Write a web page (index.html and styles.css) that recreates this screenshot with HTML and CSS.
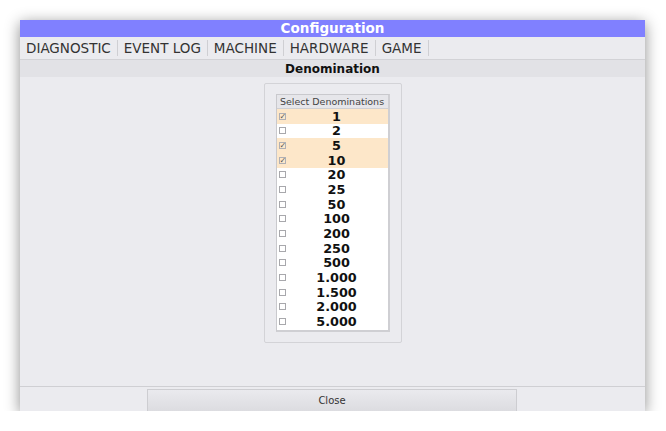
FILE: index.html
```html
<!DOCTYPE html>
<html>
<head>
<meta charset="utf-8">
<link rel="stylesheet" href="styles.css">
</head>
<body>
<div class="window">
  <div class="titlebar">Configuration</div>
  <div class="tabs">
    <span class="tab">DIAGNOSTIC</span>
    <span class="tab">EVENT LOG</span>
    <span class="tab">MACHINE</span>
    <span class="tab">HARDWARE</span>
    <span class="tab">GAME</span>
  </div>
  <div class="section">Denomination</div>
  <div class="content">
    <div class="panel">
      <div class="list">
        <div class="list-head">Select Denominations</div>
        <div class="row sel"><span class="cb on">✓</span><span class="val">1</span></div>
        <div class="row"><span class="cb"></span><span class="val">2</span></div>
        <div class="row sel"><span class="cb on">✓</span><span class="val">5</span></div>
        <div class="row sel"><span class="cb on">✓</span><span class="val">10</span></div>
        <div class="row"><span class="cb"></span><span class="val">20</span></div>
        <div class="row"><span class="cb"></span><span class="val">25</span></div>
        <div class="row"><span class="cb"></span><span class="val">50</span></div>
        <div class="row"><span class="cb"></span><span class="val">100</span></div>
        <div class="row"><span class="cb"></span><span class="val">200</span></div>
        <div class="row"><span class="cb"></span><span class="val">250</span></div>
        <div class="row"><span class="cb"></span><span class="val">500</span></div>
        <div class="row"><span class="cb"></span><span class="val">1.000</span></div>
        <div class="row"><span class="cb"></span><span class="val">1.500</span></div>
        <div class="row"><span class="cb"></span><span class="val">2.000</span></div>
        <div class="row"><span class="cb"></span><span class="val">5.000</span></div>
      </div>
    </div>
  </div>
  <div class="footer">
    <button class="close">Close</button>
  </div>
</div>
</body>
</html>
```

FILE: styles.css
```css
html, body {
  margin: 0;
  padding: 0;
  background: #ffffff;
}
body {
  padding: 20px 0 0 20px;
  font-family: "DejaVu Sans", Verdana, sans-serif;
}
.window {
  width: 625px;
  height: 391px;
  background: #ebebef;
  box-shadow: 0 3px 14px rgba(0, 0, 0, 0.45);
  display: flex;
  flex-direction: column;
}
.titlebar {
  height: 17px;
  background: #8080ff;
  color: #ffffff;
  font-weight: bold;
  font-size: 13.5px;
  line-height: 17px;
  text-align: center;
}
.tabs {
  height: 22px;
  display: flex;
  align-items: center;
  background: #ebebef;
}
.tab {
  font-size: 13.5px;
  color: #333333;
  padding: 0 6px;
  line-height: 16px;
  border-right: 1px solid #cfcfd3;
}
.section {
  height: 17px;
  border-top: 1px solid #d2d2d6;
  background: #e2e2e6;
  font-size: 12px;
  font-weight: bold;
  color: #111111;
  text-align: center;
  line-height: 18px;
}
.content {
  flex: 1;
  display: flex;
  justify-content: center;
  align-items: flex-start;
  padding-top: 6px;
  border-bottom: 1px solid #cfcfd3;
}
.panel {
  width: 114px;
  height: 238px;
  padding: 10px 11px 10px 11px;
  border: 1px solid #d3d3d7;
  border-radius: 2px;
  background: #ebebef;
}
.list {
  background: #ffffff;
  border: 1px solid #c9c9cd;
  border-right: 2px solid #cfcfd3;
  border-bottom: 2px solid #cfcfd3;
  height: 238px;
  box-sizing: border-box;
}
.list-head {
  height: 13px;
  background: #e6e6ea;
  border-bottom: 1px solid #cfcfd3;
  font-size: 9.5px;
  color: #444444;
  text-align: center;
  line-height: 14px;
}
.row {
  height: 14.67px;
  display: flex;
  align-items: center;
}
.row.sel {
  background: #fde7c9;
}
.cb {
  width: 5px;
  height: 5px;
  border: 1px solid #a8a8ac;
  margin-left: 2px;
  font-size: 8px;
  line-height: 5px;
  color: #555555;
  flex: none;
}
.cb.on {
  border-color: #b0b0b4;
}
.val {
  flex: 1;
  text-align: center;
  font-size: 12.8px;
  font-weight: bold;
  color: #111111;
}
.footer {
  height: 24px;
  display: flex;
  align-items: flex-end;
  padding-left: 127px;
}
.close {
  width: 370px;
  height: 22px;
  margin: 0;
  border: 1px solid #cdcdd1;
  border-bottom: none;
  background: linear-gradient(#eaeaee, #dcdce0);
  font-family: "DejaVu Sans", Verdana, sans-serif;
  font-size: 10px;
  color: #333333;
  padding: 0;
}
```
